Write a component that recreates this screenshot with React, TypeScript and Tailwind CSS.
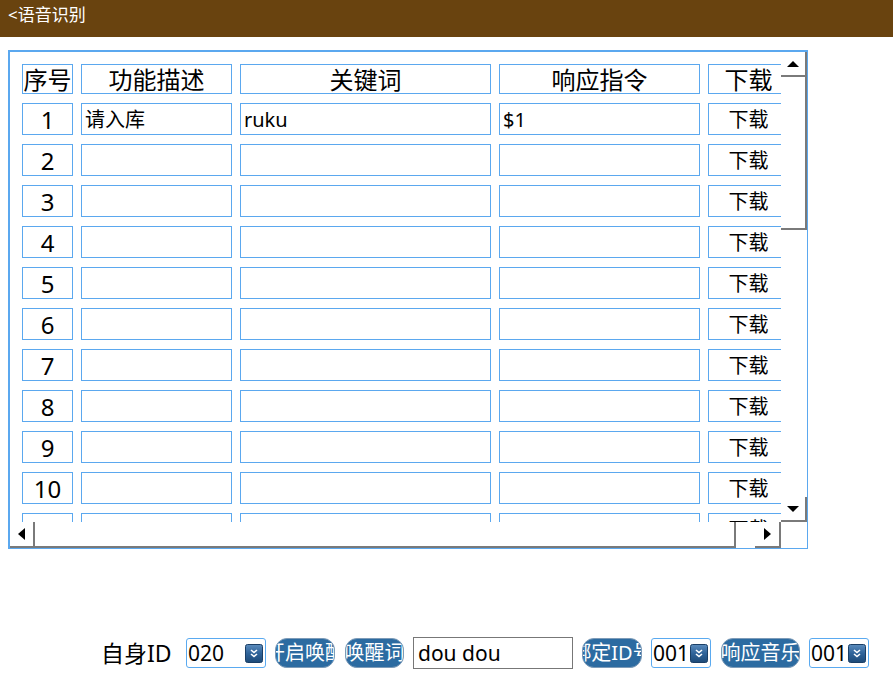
import React from "react";

type Row = { no: number; desc: string; key: string; cmd: string };

const rows: Row[] = Array.from({ length: 11 }, (_, i) => ({
  no: i + 1,
  desc: i === 0 ? "请入库" : "",
  key: i === 0 ? "ruku" : "",
  cmd: i === 0 ? "$1" : "",
}));

const cellBorder = "border border-[#5ba8ef] bg-white";

function TriUp() {
  return (
    <svg width="12" height="6" viewBox="0 0 12 6">
      <polygon points="0,6 12,6 6,0" fill="#000" />
    </svg>
  );
}

function TriDown() {
  return (
    <svg width="12" height="6" viewBox="0 0 12 6">
      <polygon points="0,0 12,0 6,6" fill="#000" />
    </svg>
  );
}

function TriLeft() {
  return (
    <svg width="7" height="12" viewBox="0 0 7 12">
      <polygon points="7,0 7,12 0,6" fill="#000" />
    </svg>
  );
}

function TriRight() {
  return (
    <svg width="7" height="12" viewBox="0 0 7 12">
      <polygon points="0,0 0,12 7,6" fill="#000" />
    </svg>
  );
}

// small blue square with a double chevron, used by the dropdowns
function DropIcon() {
  return (
    <svg width="18" height="19" viewBox="0 0 18 19">
      <defs>
        <linearGradient id="dd" x1="0" y1="0" x2="0" y2="1">
          <stop offset="0" stopColor="#5b8cbd" />
          <stop offset="0.5" stopColor="#2f6399" />
          <stop offset="1" stopColor="#1d4a78" />
        </linearGradient>
      </defs>
      <rect x="0.5" y="0.5" width="17" height="18" rx="2" fill="url(#dd)" stroke="#1b3f66" />
      <polyline points="6,6 9,8.5 12,6" fill="none" stroke="#fff" strokeWidth="1.6" />
      <polyline points="6,10 9,12.5 12,10" fill="none" stroke="#fff" strokeWidth="1.6" />
    </svg>
  );
}

function Select({ value, width }: { value: string; width: string }) {
  return (
    <div
      className={`${width} h-[30px] border border-[#5aaaf0] rounded-[3px] bg-white flex items-center justify-between pl-[1px] pr-[2px] overflow-hidden`}
    >
      <span className="text-[21px] leading-none text-black">{value}</span>
      <DropIcon />
    </div>
  );
}

function PillButton({ label, width }: { label: string; width: string }) {
  return (
    <div
      className={`${width} h-[30px] rounded-[12px] bg-[#2c6ba1] border border-[#7d9bb8] flex items-center justify-center overflow-hidden`}
    >
      <span className="whitespace-nowrap text-white text-[20px] leading-none">{label}</span>
    </div>
  );
}

export default function App() {
  return (
    <div className="w-[893px] h-[689px] bg-white font-['Noto_Sans','Noto_Sans_CJK_SC',sans-serif] text-black">
      {/* title bar */}
      <div className="h-[37px] bg-[#69430f] px-2 text-white text-[17px] leading-[30px]">
        &lt;语音识别
      </div>

      {/* table frame */}
      <div className="ml-2 mt-[13px] w-[800px] h-[499px] border-t-2 border-l-2 border-r border-b border-[#5ba8ef] flex flex-col">
        <div className="flex h-[470px]">
          <div className="w-[771px] h-[470px] overflow-hidden pt-[12px] pl-[12px]">
            <div className="grid w-max grid-cols-[51px_151px_251px_201px_81px] gap-x-[8px] gap-y-[9px]">
              {["序号", "功能描述", "关键词", "响应指令", "下载"].map((h) => (
                <div key={h} className={`${cellBorder} h-[30px] text-[24px] leading-[30px] text-center whitespace-nowrap`}>
                  {h}
                </div>
              ))}
              {rows.map((r) => (
                <React.Fragment key={r.no}>
                  <div className={`${cellBorder} h-[32px] text-[24px] leading-[32px] text-center`}>{r.no}</div>
                  <div className={`${cellBorder} h-[32px] text-[20px] leading-[32px] pl-[3px]`}>{r.desc}</div>
                  <div className={`${cellBorder} h-[32px] text-[20px] leading-[32px] pl-[3px]`}>{r.key}</div>
                  <div className={`${cellBorder} h-[32px] text-[20px] leading-[32px] pl-[3px]`}>{r.cmd}</div>
                  <div className={`${cellBorder} h-[32px] text-[20px] leading-[32px] text-center`}>下载</div>
                </React.Fragment>
              ))}
            </div>
          </div>

          {/* vertical scrollbar */}
          <div className="w-[26px] h-[470px] flex flex-col bg-white">
            <div className="h-[25px] border-r-2 border-b-2 border-[#7a7a7a] flex items-center justify-center">
              <TriUp />
            </div>
            <div className="h-[153px] border-r-2 border-b-2 border-[#7a7a7a]" />
            <div className="flex-1" />
            <div className="h-[25px] border-r-2 border-b-2 border-[#7a7a7a] flex items-center justify-center">
              <TriDown />
            </div>
          </div>
        </div>

        {/* horizontal scrollbar */}
        <div className="flex h-[26px] bg-white">
          <div className="w-[25px] border-r-2 border-b-2 border-[#7a7a7a] flex items-center justify-center">
            <TriLeft />
          </div>
          <div className="w-[701px] border-r-2 border-b-2 border-[#7a7a7a]" />
          <div className="flex-1" />
          <div className="w-[26px] border-r-2 border-b-2 border-[#7a7a7a] flex items-center justify-center">
            <TriRight />
          </div>
          <div className="w-[26px]" />
        </div>
      </div>

      {/* bottom controls */}
      <div className="mt-[88px] h-[32px] pl-[101px] flex items-center">
        <div className="w-[85px] text-[23px] leading-none">自身ID</div>
        <Select value="020" width="w-[80px]" />
        <div className="ml-[9px]">
          <PillButton label="开启唤醒" width="w-[60px]" />
        </div>
        <div className="ml-[10px]">
          <PillButton label="唤醒词" width="w-[59px]" />
        </div>
        <div className="ml-[9px] w-[160px] h-[32px] border border-[#777] flex items-center pl-[4px] text-[21px] leading-none">
          dou dou
        </div>
        <div className="ml-[9px]">
          <PillButton label="绑定ID号" width="w-[60px]" />
        </div>
        <div className="ml-[9px]">
          <Select value="001" width="w-[60px]" />
        </div>
        <div className="ml-[10px]">
          <PillButton label="响应音乐" width="w-[79px]" />
        </div>
        <div className="ml-[9px]">
          <Select value="001" width="w-[60px]" />
        </div>
      </div>
    </div>
  );
}
